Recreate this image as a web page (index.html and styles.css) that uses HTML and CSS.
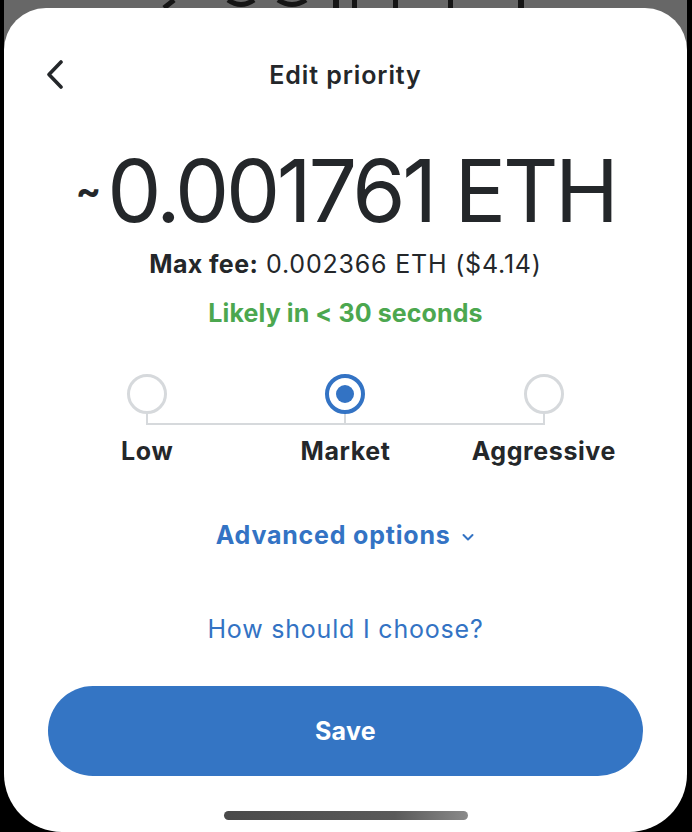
FILE: index.html
```html
<!DOCTYPE html>
<html lang="en">
<head>
<meta charset="utf-8">
<title>Edit priority</title>
<link rel="stylesheet" href="styles.css">
</head>
<body>
<div class="screen">
  <div class="device">
    <svg class="peek" width="683" height="8" viewBox="0 0 683 8" aria-hidden="true">
      <path d="M170 0 L160 8" stroke="#151515" stroke-width="5"/>
      <path d="M224 0 Q237 9 250 0" stroke="#151515" stroke-width="5" fill="none"/>
      <path d="M274 0 Q288 9 302 0" stroke="#151515" stroke-width="5" fill="none"/>
      <rect x="329" y="0" width="6" height="8" fill="#151515"/>
      <rect x="348" y="0" width="5" height="8" fill="#151515"/>
      <rect x="389" y="0" width="5" height="8" fill="#151515"/>
      <rect x="444" y="0" width="5" height="8" fill="#151515"/>
      <rect x="514" y="0" width="6" height="8" fill="#151515"/>
    </svg>
    <div class="sheet">
      <header class="header">
        <button class="back" aria-label="Back">
          <svg width="20" height="30" viewBox="0 0 20 30"><path d="M15 2 L3 14.5 L15 27" fill="none" stroke="#24272a" stroke-width="3.6" stroke-linecap="round" stroke-linejoin="round"/></svg>
        </button>
        <h1 class="title">Edit priority</h1>
        <span class="spacer"></span>
      </header>

      <div class="amount"><span class="tilde">~</span>0.001761 ETH</div>
      <div class="maxfee"><b>Max fee:</b> 0.002366 ETH ($4.14)</div>
      <div class="likely">Likely in &lt; 30 seconds</div>

      <div class="slider">
        <div class="knobs">
          <div class="opt"><span class="radio"></span><span class="stem"></span></div>
          <div class="opt"><span class="radio selected"><span class="dot"></span></span><span class="stem"></span></div>
          <div class="opt"><span class="radio"></span><span class="stem"></span></div>
        </div>
        <div class="rail"></div>
        <div class="labels">
          <span>Low</span>
          <span>Market</span>
          <span>Aggressive</span>
        </div>
      </div>

      <div class="advanced">Advanced options
        <svg width="14" height="10" viewBox="0 0 14 10"><path d="M2.5 3 L7 7.5 L11.5 3" fill="none" stroke="#3373c4" stroke-width="2" stroke-linecap="round" stroke-linejoin="round"/></svg>
      </div>
      <div class="how">How should I choose?</div>

      <button class="save">Save</button>
      <div class="home"></div>
    </div>
  </div>
</div>
</body>
</html>
```

FILE: styles.css
```css
* { box-sizing: border-box; }
html, body { margin: 0; padding: 0; }
body {
  background: #000;
  font-family: "Inter", "Open Sans", sans-serif;
  color: #24272a;
}
.screen {
  width: 692px;
  height: 832px;
  background: #000;
  padding: 0 5px 0 4px;
  overflow: hidden;
}
.device {
  height: 832px;
  display: flex;
  flex-direction: column;
  background: linear-gradient(#676767 0 80px, #000 80px);
}
.peek { display: block; flex: none; }
.sheet {
  flex: 1;
  background: #fff;
  border-radius: 42px 42px 58px 58px;
  padding: 47px 44px 0;
  display: flex;
  flex-direction: column;
  align-items: stretch;
}
.header {
  height: 40px;
  display: flex;
  align-items: center;
  justify-content: space-between;
}
.back {
  width: 24px;
  height: 40px;
  padding: 0;
  border: 0;
  background: none;
  display: flex;
  align-items: center;
  justify-content: flex-start;
  margin-left: -2px;
}
.back svg { display: block; }
.spacer { width: 22px; }
.title {
  margin: 0;
  font-size: 25px;
  font-weight: 600;
  line-height: 40px;
  letter-spacing: 0.9px;
}
.amount {
  margin-top: 53px;
  text-align: center;
  font-size: 86px;
  line-height: 86px;
  font-weight: 400;
  letter-spacing: -3.4px;
  white-space: nowrap;
}
.tilde {
  font-size: 38px;
  line-height: 0;
  font-weight: 700;
  vertical-align: 18px;
  margin-right: 6px;
  letter-spacing: 0;
}
.maxfee {
  margin-top: 15px;
  text-align: center;
  font-size: 25px;
  line-height: 30px;
  letter-spacing: 0.8px;
}
.maxfee b { font-weight: 700; letter-spacing: 0.4px; }
.likely {
  margin-top: 19px;
  text-align: center;
  font-size: 25px;
  line-height: 30px;
  font-weight: 700;
  color: #4ca74f;
  letter-spacing: 0.1px;
}
.slider { margin-top: 46px; }
.knobs, .labels {
  display: grid;
  grid-template-columns: repeat(3, 1fr);
  justify-items: center;
}
.opt {
  display: flex;
  flex-direction: column;
  align-items: center;
}
.radio {
  width: 40px;
  height: 40px;
  border-radius: 50%;
  border: 3px solid #d6d9dc;
  display: flex;
  align-items: center;
  justify-content: center;
}
.radio.selected { border: 4px solid #3373c4; }
.dot {
  width: 18px;
  height: 18px;
  border-radius: 50%;
  background: #3373c4;
}
.stem {
  width: 2px;
  height: 9px;
  background: #d6d9dc;
}
.rail {
  height: 2px;
  background: #d6d9dc;
  margin: 0 calc(100% / 6 - 1px);
}
.labels {
  margin-top: 11px;
  font-size: 25px;
  line-height: 30px;
  font-weight: 700;
  letter-spacing: 0.6px;
}
.advanced {
  margin-top: 54px;
  text-align: center;
  font-size: 25px;
  line-height: 30px;
  font-weight: 700;
  color: #3373c4;
  letter-spacing: 0.8px;
}
.advanced svg { margin-left: 4px; vertical-align: 2px; }
.how {
  margin-top: 64px;
  text-align: center;
  font-size: 25px;
  line-height: 30px;
  color: #3373c4;
  letter-spacing: 0.8px;
}
.save {
  margin-top: 42px;
  height: 90px;
  border: 0;
  border-radius: 45px;
  background: #3475c4;
  color: #fff;
  font-family: inherit;
  font-size: 25px;
  font-weight: 700;
  letter-spacing: 0.3px;
}
.home {
  margin: 35px auto 0;
  width: 244px;
  height: 9px;
  border-radius: 5px;
  background: linear-gradient(to right, #4a4a4a, #5a5a5a 70%, #8a8a8a);
}
```
